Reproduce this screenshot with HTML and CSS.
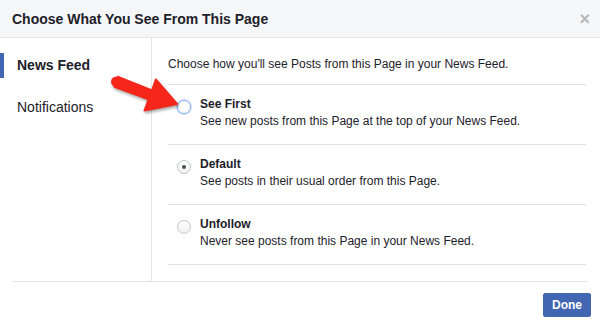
FILE: index.html
```html
<!DOCTYPE html>
<html>
<head>
<meta charset="utf-8">
<link rel="stylesheet" href="styles.css">
</head>
<body>
<div class="dialog">
  <div class="header">
    <div class="title">Choose What You See From This Page</div>
    <div class="close">×</div>
  </div>
  <div class="body">
    <div class="nav">
      <div class="nav-item active">News Feed</div>
      <div class="nav-item">Notifications</div>
    </div>
    <div class="content">
      <div class="intro">Choose how you'll see Posts from this Page in your News Feed.</div>
      <div class="option">
        <span class="radio focus"></span>
        <div class="opt-text">
          <div class="opt-title">See First</div>
          <div class="opt-desc">See new posts from this Page at the top of your News Feed.</div>
        </div>
      </div>
      <div class="option">
        <span class="radio checked"></span>
        <div class="opt-text">
          <div class="opt-title">Default</div>
          <div class="opt-desc">See posts in their usual order from this Page.</div>
        </div>
      </div>
      <div class="option">
        <span class="radio"></span>
        <div class="opt-text">
          <div class="opt-title">Unfollow</div>
          <div class="opt-desc">Never see posts from this Page in your News Feed.</div>
        </div>
      </div>
    </div>
  </div>
  <div class="footer">
    <button class="done">Done</button>
  </div>
  <svg class="arrow" width="600" height="327" viewBox="0 0 600 327">
    <polygon points="117.5,76.8 152.1,90.4 155.8,79.5 177,104 144.5,110.5 148.6,99.3 114.5,86.7" fill="#f6261b" stroke="#f6261b" stroke-width="2" stroke-linejoin="round"/>
    <circle cx="116" cy="81.7" r="5" fill="#f6261b"/>
  </svg>
</div>
</body>
</html>
```

FILE: styles.css
```css
* { box-sizing: border-box; }
html, body { margin: 0; padding: 0; }
body {
  width: 600px;
  height: 327px;
  background: #fff;
  font-family: "Liberation Sans", Arial, sans-serif;
  color: #1d2129;
  overflow: hidden;
}
.dialog { position: relative; width: 600px; height: 327px; }
.header {
  height: 38px;
  background: #f5f6f7;
  border-bottom: 1px solid #e5e5e5;
  display: flex;
  align-items: center;
  justify-content: space-between;
  padding: 0 10px 0 12px;
}
.title { font-size: 14px; font-weight: bold; color: #1d2129; }
.close { font-size: 18px; color: #b4b7bc; font-weight: bold; line-height: 1; }
.body { display: flex; height: 243px; }
.nav {
  width: 152px;
  border-right: 1px solid #e5e5e5;
  padding-top: 15px;
}
.nav-item {
  height: 25px;
  line-height: 25px;
  font-size: 14px;
  margin-bottom: 17px;
  color: #1d2129;
  border-left: 4px solid transparent;
  padding-left: 13px;
}
.nav-item.active { font-weight: bold; border-left-color: #4267b2; }
.content { flex: 1; padding: 0 14px 0 16px; }
.intro {
  font-size: 12px;
  line-height: 16px;
  padding: 18px 0 12px;
  border-bottom: 1px solid #dddfe2;
  color: #1d2129;
}
.option {
  display: flex;
  height: 60px;
  border-bottom: 1px solid #dddfe2;
  padding-top: 11px;
}
.radio {
  width: 14px;
  height: 14px;
  border-radius: 50%;
  border: 1px solid #c4c6ca;
  background: linear-gradient(#fff, #f0f0f0);
  margin: 4px 9px 0 9px;
  position: relative;
  flex: none;
}
.radio.focus { border-color: #8fb0f0; box-shadow: 0 0 0 1px rgba(120,160,240,0.35); background: #fff; }
.radio.checked::after {
  content: "";
  position: absolute;
  left: 4px; top: 4px;
  width: 4px; height: 4px;
  border-radius: 50%;
  background: #4b4f56;
}
.opt-text { font-size: 12px; line-height: 17px; }
.opt-title { font-weight: bold; }
.footer {
  margin: 0 12px;
  border-top: 1px solid #e5e5e5;
  display: flex;
  justify-content: flex-end;
  padding-top: 11px;
}
.done {
  font-family: "Liberation Sans", Arial, sans-serif;
  background: #4267b2;
  border: 1px solid #4267b2;
  color: #fff;
  font-weight: bold;
  font-size: 12px;
  width: 48px;
  height: 24px;
  border-radius: 2px;
  padding: 0;
  margin-right: -3px;
}
.arrow {
  position: absolute;
  left: 0; top: 0;
  pointer-events: none;
  filter: drop-shadow(1px 2px 1.5px rgba(0,0,0,0.35));
}
```
